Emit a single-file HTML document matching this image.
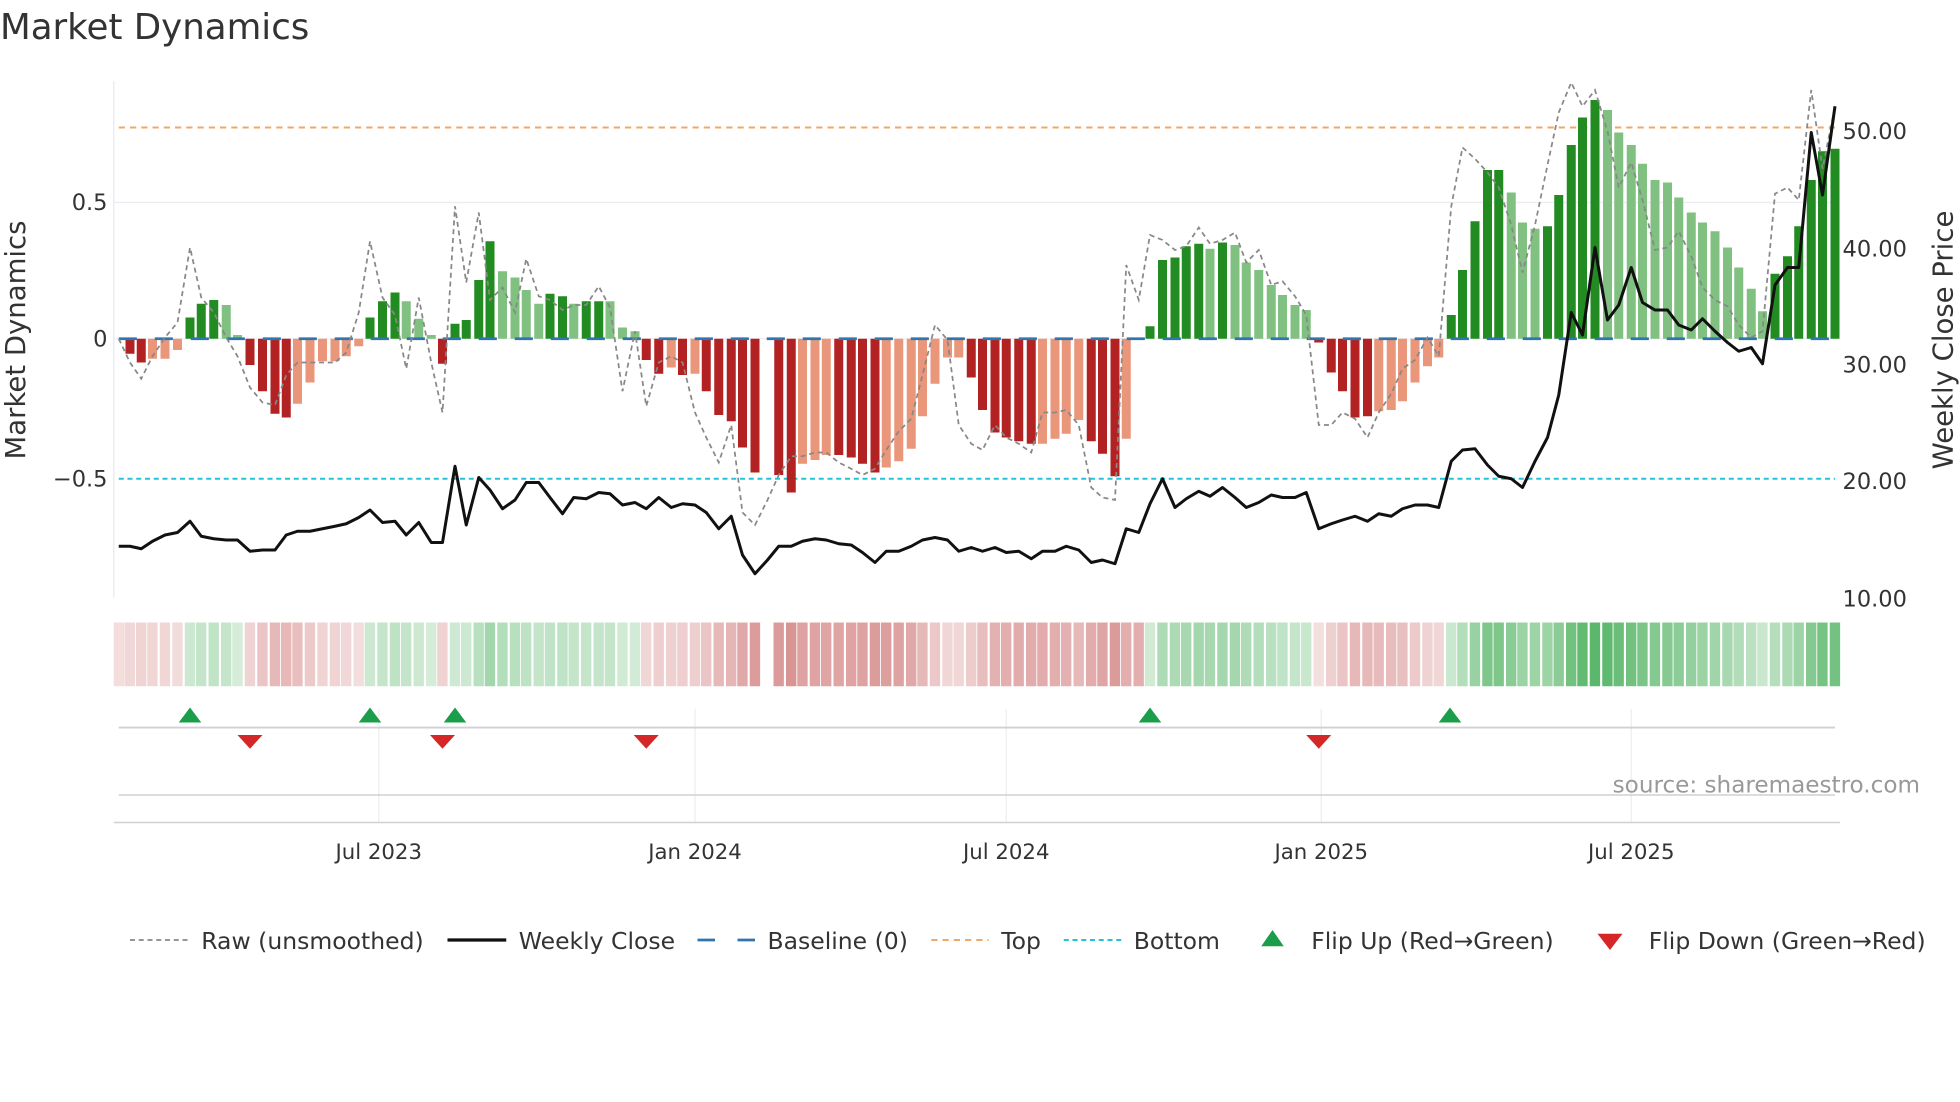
<!DOCTYPE html>
<html><head><meta charset="utf-8">
<style>
html,body{margin:0;padding:0;background:#fff;}
svg{display:block;font-family:"DejaVu Sans","Liberation Sans",sans-serif;}
</style></head>
<body>
<svg id="c" width="1960" height="1102" viewBox="0 0 1568 881.6" xmlns="http://www.w3.org/2000/svg">
<text x="0" y="31" font-size="28.5" fill="#333">Market Dynamics</text>
<line x1="91" y1="65" x2="91" y2="478" stroke="#e8e8ee" stroke-width="1"/>
<line x1="91" y1="162" x2="1470" y2="162" stroke="#ececf2" stroke-width="1"/>
<line x1="91" y1="271" x2="1470" y2="271" stroke="#ececf2" stroke-width="1"/>
<g font-size="18" fill="#333" text-anchor="end">
<text x="86" y="168">0.5</text>
<text x="86" y="277">0</text>
<text x="86" y="389">−0.5</text>
</g>
<g font-size="18" fill="#333">
<text x="1474" y="111">50.00</text>
<text x="1474" y="205">40.00</text>
<text x="1474" y="298">30.00</text>
<text x="1474" y="391">20.00</text>
<text x="1474" y="485">10.00</text>
</g>
<text transform="translate(20,272) rotate(-90)" font-size="22" fill="#333" text-anchor="middle">Market Dynamics</text>
<text transform="translate(1562,272) rotate(-90)" font-size="22" fill="#333" text-anchor="middle">Weekly Close Price</text>
<line x1="95" y1="102" x2="1468" y2="102" stroke="#f0a868" stroke-width="1.6" stroke-dasharray="5,4"/>
<line x1="95" y1="383" x2="1468" y2="383" stroke="#22c3dd" stroke-width="1.6" stroke-dasharray="4,3"/>
<g id="bars"></g>
<line x1="95" y1="271" x2="1468" y2="271" stroke="#2f75b0" stroke-width="2.2" stroke-dasharray="14.5,14.3"/>
<polyline id="raw" fill="none" stroke="#888" stroke-width="1.4" stroke-dasharray="4,3"/>
<polyline id="px" fill="none" stroke="#111" stroke-width="2.4" stroke-linejoin="round"/>
<g id="heat"></g>
<g stroke="#eeeeee" stroke-width="1">
<line x1="303" y1="567" x2="303" y2="658"/><line x1="556" y1="567" x2="556" y2="658"/>
<line x1="805" y1="567" x2="805" y2="658"/><line x1="1057" y1="567" x2="1057" y2="658"/>
<line x1="1305" y1="567" x2="1305" y2="658"/>
</g>
<line x1="95" y1="582" x2="1468" y2="582" stroke="#d0d0d6" stroke-width="1.5"/>
<line x1="95" y1="636" x2="1468" y2="636" stroke="#d0d0d6" stroke-width="1.2"/>
<line x1="91" y1="658" x2="1472" y2="658" stroke="#d0d0d6" stroke-width="1.2"/>
<g id="mk"></g>
<text x="1536" y="634" font-size="18.5" fill="#999" text-anchor="end">source: sharemaestro.com</text>
<g font-size="17" fill="#333" text-anchor="middle">
<text x="303" y="687">Jul 2023</text><text x="556" y="687">Jan 2024</text>
<text x="805" y="687">Jul 2024</text><text x="1057" y="687">Jan 2025</text>
<text x="1305" y="687">Jul 2025</text>
</g>
<g font-size="18.8" fill="#333">
<line x1="104" y1="752" x2="150" y2="752" stroke="#888" stroke-width="1.4" stroke-dasharray="4,3"/>
<text x="161" y="759">Raw (unsmoothed)</text>
<line x1="358" y1="752" x2="405" y2="752" stroke="#111" stroke-width="2.6"/>
<text x="415" y="759">Weekly Close</text>
<line x1="558" y1="752" x2="604" y2="752" stroke="#2f75b0" stroke-width="2.2" stroke-dasharray="14,18"/>
<text x="614" y="759">Baseline (0)</text>
<line x1="745" y1="752" x2="791" y2="752" stroke="#f0a868" stroke-width="1.6" stroke-dasharray="5,4"/>
<text x="801" y="759">Top</text>
<line x1="851" y1="752" x2="897" y2="752" stroke="#22c3dd" stroke-width="1.6" stroke-dasharray="4,3"/>
<text x="907" y="759">Bottom</text>
<polygon points="1009,757 1027,757 1018,744" fill="#1a9e4a"/>
<text x="1049" y="759">Flip Up (Red→Green)</text>
<polygon points="1278,747 1298,747 1288,760" fill="#d62728"/>
<text x="1319" y="759">Flip Down (Green→Red)</text>
</g>
</svg>
<script>
var B=[[104,-12,'R'],[113,-19,'R'],[122,-16,'r'],[132,-16,'r'],[142,-9,'r'],[152,17,'G'],[161,28,'G'],[171,31,'G'],[181,27,'g'],[190,3,'g'],
[200,-21,'R'],[210,-42,'R'],[220,-60,'R'],[229,-63,'R'],[238,-52,'r'],[248,-35,'r'],[258,-18,'r'],[268,-18,'r'],[277,-14,'r'],[287,-6,'r'],
[296,17,'G'],[306,30,'G'],[316,37,'G'],[325,30,'g'],[335,16,'g'],[345,3,'g'],[354,-20,'R'],[364,12,'G'],[373,15,'G'],[383,47,'G'],[392,78,'G'],
[402,54,'g'],[412,49,'g'],[421,39,'g'],[431,28,'g'],[440,36,'G'],[450,34,'G'],[459,28,'g'],[469,30,'G'],[479,30,'G'],[488,30,'g'],[498,9,'g'],[508,6,'g'],
[517,-17,'R'],[527,-28,'R'],[537,-23,'r'],[546,-29,'R'],[556,-28,'r'],[565,-42,'R'],[575,-61,'R'],[585,-66,'R'],[594,-87,'R'],[604,-107,'R'],
[623,-109,'R'],[633,-123,'R'],[642,-100,'r'],[652,-97,'r'],[661,-93,'r'],[671,-93,'R'],[681,-95,'R'],[690,-100,'R'],[700,-107,'R'],[709,-103,'r'],
[719,-98,'r'],[729,-88,'r'],[738,-62,'r'],[748,-36,'r'],[758,-15,'r'],[767,-15,'r'],[777,-31,'R'],[786,-57,'R'],[796,-75,'R'],[805,-79,'R'],[815,-82,'R'],
[825,-84,'R'],[834,-84,'r'],[844,-80,'r'],[853,-76,'r'],[863,-65,'r'],[873,-82,'R'],[882,-92,'R'],[892,-110,'R'],[901,-80,'r'],[911,0,'r'],
[920,10,'G'],[930,63,'G'],[940,65,'G'],[949,74,'G'],[959,76,'G'],[968,72,'g'],[978,77,'G'],[988,75,'g'],[997,61,'g'],[1007,55,'g'],[1017,43,'g'],
[1026,35,'g'],[1036,27,'g'],[1045,23,'g'],[1055,-3,'R'],[1065,-27,'R'],[1074,-42,'R'],[1084,-63,'R'],[1094,-62,'R'],[1103,-58,'r'],[1113,-57,'r'],
[1122,-50,'r'],[1132,-35,'r'],[1142,-22,'r'],[1151,-15,'r'],[1161,19,'G'],[1170,55,'G'],[1180,94,'G'],[1190,135,'G'],[1199,135,'G'],[1209,117,'g'],
[1218,93,'g'],[1228,88,'g'],[1238,90,'G'],[1247,115,'G'],[1257,155,'G'],[1266,177,'G'],[1276,191,'G'],[1286,183,'g'],[1295,165,'g'],[1305,155,'g'],
[1314,140,'g'],[1324,127,'g'],[1334,125,'g'],[1343,113,'g'],[1353,101,'g'],[1362,93,'g'],[1372,86,'g'],[1382,73,'g'],[1391,57,'g'],[1401,40,'g'],
[1410,22,'g'],[1420,52,'G'],[1430,66,'G'],[1439,90,'G'],[1449,127,'G'],[1458,150,'G'],[1468,152,'G']];
var col={G:'#228b22',g:'#80c080',R:'#b22222',r:'#e9967a'};
var s='';
B.forEach(function(b){var h=b[1];if(h==0)return;var y=h>0?271-h:271;
s+='<rect x="'+(b[0]-3.6)+'" y="'+y+'" width="7.2" height="'+Math.abs(h)+'" fill="'+col[b[2]]+'"/>';});
document.getElementById('bars').innerHTML=s;
var hs='';
for(var i=0;i<B.length;i++){var b=B[i];var h=b[1];if(b[0]==911)h=-80;
var a,c;
if(h>=0){a=0.2+0.6*Math.min(1,h/190);c='rgba(50,165,70,'+a.toFixed(2)+')';}else{a=0.18+0.45*Math.min(1,Math.abs(h)/120);c='rgba(195,85,85,'+a.toFixed(2)+')';}
hs+='<rect x="'+(b[0]-4.2)+'" y="498" width="8.3" height="51" fill="'+c+'"/>';}
hs+='<rect x="91" y="498" width="8.5" height="51" fill="rgba(195,85,85,0.2)"/>';
document.getElementById('heat').innerHTML=hs;
document.getElementById('px').setAttribute('points',"95,437 104,437 113,439 122,433 132,428 142,426 152,417 161,429 171,431 181,432 190,432 200,441 210,440 220,440 229,428 238,425 248,425 258,423 268,421 277,419 287,414 296,408 306,418 316,417 325,428 335,418 345,434 354,434 364,373 373,420 383,382 392,392 402,407 412,400 421,386 431,386 440,398 450,411 459,398 469,399 479,394 488,395 498,404 508,402 517,407 527,398 537,406 546,403 556,404 565,410 575,423 585,413 594,444 604,459 614,448 623,437 633,437 642,433 652,431 661,432 671,435 681,436 690,442 700,450 709,441 719,441 729,437 738,432 748,430 758,432 767,441 777,438 786,441 796,438 805,442 815,441 825,447 834,441 844,441 853,437 863,440 873,450 882,448 892,451 901,423 911,426 920,403 930,383 940,406 949,399 959,393 968,397 978,390 988,398 997,406 1007,402 1017,396 1026,398 1036,398 1045,394 1055,423 1065,419 1074,416 1084,413 1094,417 1103,411 1113,413 1122,407 1132,404 1142,404 1151,406 1161,369 1170,360 1180,359 1190,372 1199,381 1209,383 1218,390 1228,369 1238,350 1247,316 1257,250 1266,268 1276,198 1286,256 1295,244 1305,214 1314,242 1324,248 1334,248 1343,260 1353,264 1362,255 1372,265 1382,274 1391,281 1401,278 1410,291 1420,228 1430,214 1439,214 1449,106 1458,156 1468,85");
document.getElementById('raw').setAttribute('points',"95,271 104,290 113,303 122,285 132,270 142,258 152,198 161,238 171,250 181,270 190,285 200,310 210,322 220,324 229,300 238,290 248,290 258,290 268,290 277,282 287,250 296,193 306,238 316,252 325,295 335,238 345,290 354,330 364,165 373,226 383,170 392,240 402,230 412,250 421,207 431,237 440,240 450,248 459,244 469,244 479,229 488,246 498,313 508,265 517,325 527,290 537,285 546,290 556,330 565,350 575,370 585,340 594,410 604,420 614,400 623,380 633,365 642,365 652,362 661,362 671,370 681,375 690,380 700,375 709,360 719,345 729,335 738,300 748,260 758,272 767,340 777,355 786,360 796,340 805,350 815,355 825,362 834,330 844,330 853,328 863,340 873,390 882,398 892,400 901,212 911,240 920,188 930,192 940,200 949,197 959,182 968,195 978,192 988,186 997,210 1007,200 1017,228 1026,225 1036,237 1045,252 1055,340 1065,340 1074,330 1084,335 1094,350 1103,330 1113,315 1122,295 1132,288 1142,270 1151,285 1161,165 1170,118 1180,127 1190,138 1199,150 1209,180 1218,218 1228,180 1238,132 1247,90 1257,66 1266,85 1276,72 1286,105 1295,150 1305,130 1314,160 1324,200 1334,198 1343,185 1353,205 1362,230 1372,240 1382,245 1391,260 1401,270 1410,265 1420,155 1430,150 1439,160 1449,72 1458,135 1468,85");
var m='';[152,296,364,920,1160].forEach(function(x){m+='<polygon points="'+(x-9)+',578 '+(x+9)+',578 '+x+',566" fill="#1a9e4a"/>';});
[200,354,517,1055].forEach(function(x){m+='<polygon points="'+(x-10)+',588 '+(x+10)+',588 '+x+',599" fill="#d62728"/>';});
document.getElementById('mk').innerHTML=m;
</script>
</body></html>
